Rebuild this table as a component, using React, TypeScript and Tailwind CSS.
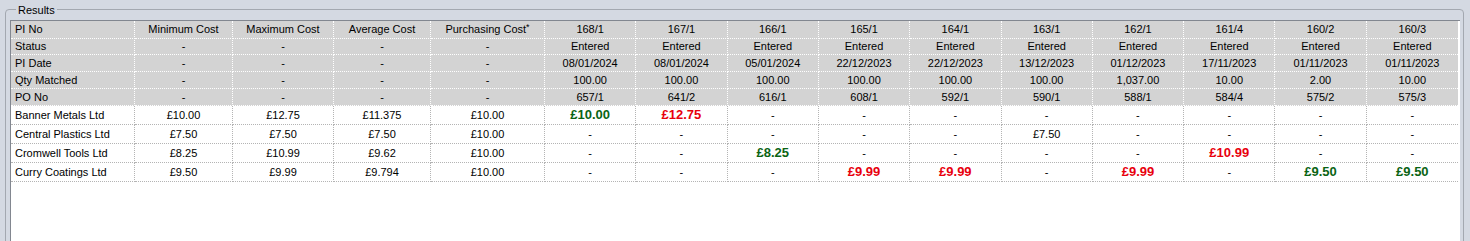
import React from 'react';

type Cell = { v: string; tone?: 'green' | 'red' };

const piNos = ['168/1', '167/1', '166/1', '165/1', '164/1', '163/1', '162/1', '161/4', '160/2', '160/3'];
const dates = ['08/01/2024', '08/01/2024', '05/01/2024', '22/12/2023', '22/12/2023', '13/12/2023', '01/12/2023', '17/11/2023', '01/11/2023', '01/11/2023'];
const qtys = ['100.00', '100.00', '100.00', '100.00', '100.00', '100.00', '1,037.00', '10.00', '2.00', '10.00'];
const poNos = ['657/1', '641/2', '616/1', '608/1', '592/1', '590/1', '588/1', '584/4', '575/2', '575/3'];

const headerRows: { label: string; cells: string[] }[] = [
  { label: 'PI No', cells: ['Minimum Cost', 'Maximum Cost', 'Average Cost', 'Purchasing Cost*', ...piNos] },
  { label: 'Status', cells: ['-', '-', '-', '-', ...piNos.map(() => 'Entered')] },
  { label: 'PI Date', cells: ['-', '-', '-', '-', ...dates] },
  { label: 'Qty Matched', cells: ['-', '-', '-', '-', ...qtys] },
  { label: 'PO No', cells: ['-', '-', '-', '-', ...poNos] },
];

const d: Cell = { v: '-' };
const g = (v: string): Cell => ({ v, tone: 'green' });
const r = (v: string): Cell => ({ v, tone: 'red' });
const p = (v: string): Cell => ({ v });

const supplierRows: { name: string; cells: Cell[] }[] = [
  { name: 'Banner Metals Ltd', cells: [p('£10.00'), p('£12.75'), p('£11.375'), p('£10.00'), g('£10.00'), r('£12.75'), d, d, d, d, d, d, d, d] },
  { name: 'Central Plastics Ltd', cells: [p('£7.50'), p('£7.50'), p('£7.50'), p('£10.00'), d, d, d, d, d, p('£7.50'), d, d, d, d] },
  { name: 'Cromwell Tools Ltd', cells: [p('£8.25'), p('£10.99'), p('£9.62'), p('£10.00'), d, d, g('£8.25'), d, d, d, d, r('£10.99'), d, d] },
  { name: 'Curry Coatings Ltd', cells: [p('£9.50'), p('£9.99'), p('£9.794'), p('£10.00'), d, d, d, r('£9.99'), r('£9.99'), d, r('£9.99'), d, g('£9.50'), g('£9.50')] },
];

const cols = 'grid grid-cols-[124px_98px_101px_97px_114px_repeat(10,1fr)]';

export default function App() {
  return (
    <div className="h-[241px] w-[1470px] overflow-hidden bg-[#d4d9e2] font-['Liberation_Sans',Arial,sans-serif] text-[11px] text-black">
      <div className="pl-[5px] pr-[6px] pt-[9px]">
        {/* Results group box */}
        <div className="relative h-[260px] rounded-t-[4px] border border-[#a3a8b0] pl-[4px] pr-[3px] pt-[10px]">
          <span className="absolute left-[10px] top-[-6px] bg-[#d4d9e2] px-[2px] leading-[12px]">Results</span>

          <div className="h-full border-l border-t border-[#828790] bg-white pr-[2px]">
            {/* header rows */}
            {headerRows.map((row) => (
              <div key={row.label} className={`${cols} h-[17px] bg-[#d3d3d3]`}>
                <div className="border-b border-r border-dotted border-white pl-[4px] leading-[16px]">{row.label}</div>
                {row.cells.map((c, i) => (
                  <div
                    key={i}
                    className={`border-b border-dotted border-white text-center leading-[16px] ${i < row.cells.length - 1 ? 'border-r' : ''}`}
                  >
                    {c === 'Purchasing Cost*' ? (
                      <>
                        Purchasing Cost<span className="relative top-[-3px] text-[9px]">*</span>
                      </>
                    ) : (
                      c
                    )}
                  </div>
                ))}
              </div>
            ))}

            {/* supplier rows */}
            {supplierRows.map((row) => (
              <div key={row.name} className={`${cols} h-[19px]`}>
                <div className="border-b border-r border-dotted border-[#b4b4b4] pl-[4px] leading-[18px]">{row.name}</div>
                {row.cells.map((c, i) => (
                  <div
                    key={i}
                    className={`border-b border-dotted border-[#b4b4b4] text-center leading-[18px] ${i < row.cells.length - 1 ? 'border-r' : ''} ${
                      c.tone === 'green'
                        ? 'text-[13px] font-bold text-[#0a6414]'
                        : c.tone === 'red'
                          ? 'text-[13px] font-bold text-[#e8000d]'
                          : ''
                    }`}
                  >
                    {c.v}
                  </div>
                ))}
              </div>
            ))}
          </div>
        </div>
      </div>
    </div>
  );
}
